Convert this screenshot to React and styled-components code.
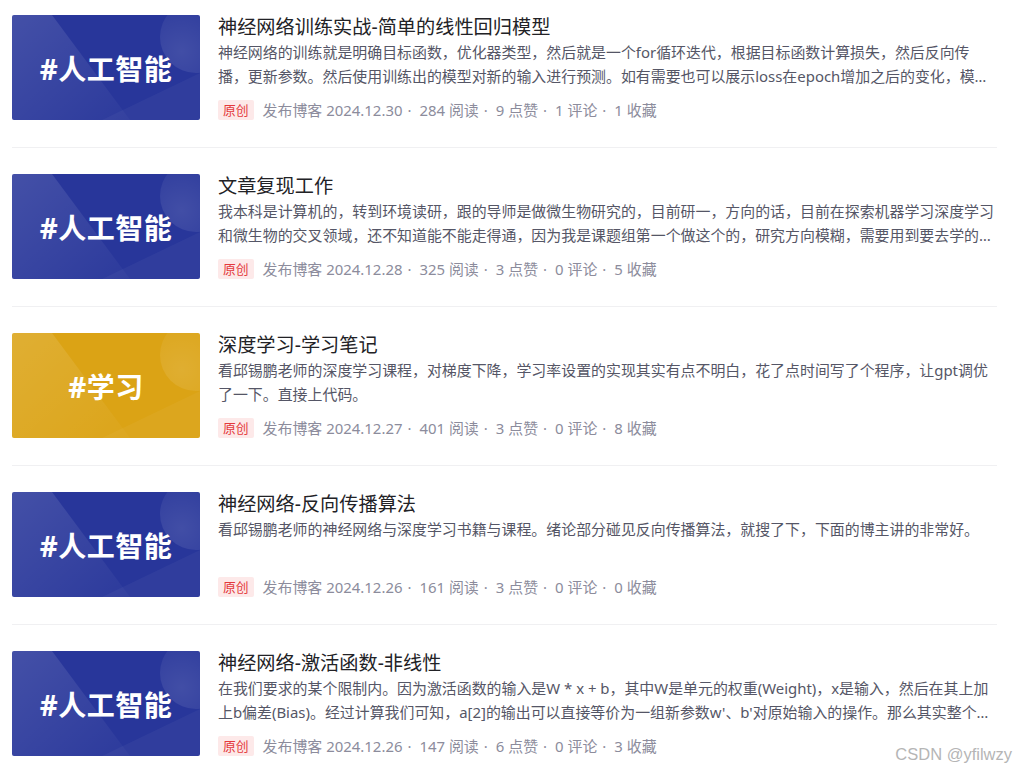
import React from "react";
import styled, { createGlobalStyle } from "styled-components";

const GlobalStyle = createGlobalStyle`
  body {
    margin: 0;
    background: #fff;
    font-family: "Noto Sans", "Noto Sans CJK SC", sans-serif;
  }
`;

const Page = styled.div`
  position: relative;
  width: 1016px;
  height: 773px;
  overflow: hidden;
  padding-left: 12px;
  box-sizing: border-box;
`;

const List = styled.div`
  width: 985px;
`;

const Item = styled.div`
  display: flex;
  gap: 18px;
  padding: 26.5px 0;
  border-bottom: 1px solid #f0f0f2;

  &:first-child {
    padding-top: 15px;
  }
`;

const Cover = styled.div`
  position: relative;
  flex: 0 0 188px;
  height: 105px;
  border-radius: 2px;
  overflow: hidden;
  display: flex;
  align-items: center;
  justify-content: center;
  background: ${(props) => (props.tone === "yellow" ? "#dba315" : "#28369a")};
`;

const CoverArt = styled.svg`
  position: absolute;
  inset: 0;
`;

const CoverText = styled.span`
  position: relative;
  color: #fff;
  font-size: 28px;
  font-weight: 700;
  letter-spacing: 0.5px;
`;

const Content = styled.div`
  flex: 1;
  min-width: 0;
  height: 105px;
  display: flex;
  flex-direction: column;
`;

const Title = styled.div`
  font-size: 19.2px;
  line-height: 24px;
  color: #222226;
  white-space: nowrap;
`;

const Desc = styled.div`
  margin-top: 2px;
  font-size: 14.93px;
  line-height: 23.5px;
  color: #555666;
  display: -webkit-box;
  -webkit-line-clamp: 2;
  -webkit-box-orient: vertical;
  overflow: hidden;
`;

const Meta = styled.div`
  margin-top: auto;
  display: flex;
  align-items: center;
  height: 21px;
  font-size: 14.93px;
  color: #8c8c9c;
  white-space: nowrap;
`;

const Tag = styled.span`
  display: inline-flex;
  align-items: center;
  height: 20px;
  padding: 0 5px;
  margin-right: 9px;
  border-radius: 2px;
  background: #fde9e9;
  color: #e4393c;
  font-size: 12.8px;
`;

const MetaItem = styled.span`
  &:not(:last-child)::after {
    content: "·";
    margin: 0 8px 0 5px;
  }
`;

const Watermark = styled.div`
  position: absolute;
  right: 4px;
  bottom: 9px;
  font-family: "Liberation Sans", Arial, sans-serif;
  font-size: 16.5px;
  color: #b5b5b5;
  text-shadow: 1px 1px 1px #fff, -1px -1px 1px #fff;
`;

const posts = [
  {
    cover: "#人工智能",
    tone: "blue",
    title: "神经网络训练实战-简单的线性回归模型",
    desc: "神经网络的训练就是明确目标函数，优化器类型，然后就是一个for循环迭代，根据目标函数计算损失，然后反向传播，更新参数。然后使用训练出的模型对新的输入进行预测。如有需要也可以展示loss在epoch增加之后的变化，模型的参数等等内容。",
    date: "2024.12.30",
    read: 284,
    like: 9,
    comment: 1,
    fav: 1,
  },
  {
    cover: "#人工智能",
    tone: "blue",
    title: "文章复现工作",
    desc: "我本科是计算机的，转到环境读研，跟的导师是做微生物研究的，目前研一，方向的话，目前在探索机器学习深度学习和微生物的交叉领域，还不知道能不能走得通，因为我是课题组第一个做这个的，研究方向模糊，需要用到要去学的东西很多。",
    date: "2024.12.28",
    read: 325,
    like: 3,
    comment: 0,
    fav: 5,
  },
  {
    cover: "#学习",
    tone: "yellow",
    title: "深度学习-学习笔记",
    desc: "看邱锡鹏老师的深度学习课程，对梯度下降，学习率设置的实现其实有点不明白，花了点时间写了个程序，让gpt调优了一下。直接上代码。",
    date: "2024.12.27",
    read: 401,
    like: 3,
    comment: 0,
    fav: 8,
  },
  {
    cover: "#人工智能",
    tone: "blue",
    title: "神经网络-反向传播算法",
    desc: "看邱锡鹏老师的神经网络与深度学习书籍与课程。绪论部分碰见反向传播算法，就搜了下，下面的博主讲的非常好。",
    date: "2024.12.26",
    read: 161,
    like: 3,
    comment: 0,
    fav: 0,
  },
  {
    cover: "#人工智能",
    tone: "blue",
    title: "神经网络-激活函数-非线性",
    desc: "在我们要求的某个限制内。因为激活函数的输入是W * x + b，其中W是单元的权重(Weight)，x是输入，然后在其上加上b偏差(Bias)。经过计算我们可知，a[2]的输出可以直接等价为一组新参数w'、b'对原始输入的操作。那么其实整个网络就等价于一个线性函数。",
    date: "2024.12.26",
    read: 147,
    like: 6,
    comment: 0,
    fav: 3,
  },
];

// background shapes of the cover picture
const Art = ({ id }) => (
  <CoverArt width="188" height="105" viewBox="0 0 188 105">
    <defs>
      <linearGradient id={id} x1="0" y1="0" x2="1" y2="1">
        <stop offset="0" stopColor="#fff" stopOpacity="0.13" />
        <stop offset="1" stopColor="#fff" stopOpacity="0.02" />
      </linearGradient>
      <radialGradient id={id + "c"} cx="0.3" cy="0.7" r="0.8">
        <stop offset="0" stopColor="#fff" stopOpacity="0.12" />
        <stop offset="1" stopColor="#fff" stopOpacity="0.02" />
      </radialGradient>
    </defs>
    <polygon points="0,0 40,0 118,105 0,105" fill={`url(#${id})`} />
    <polygon points="90,105 188,58 188,105" fill="#fff" fillOpacity="0.04" />
    <circle cx="184" cy="22" r="36" fill={`url(#${id}c)`} />
  </CoverArt>
);

const App = () => {
  return (
    <Page>
      <GlobalStyle />
      <List>
        {posts.map((post, i) => (
          <Item key={i}>
            <Cover tone={post.tone}>
              <Art id={"g" + i} />
              <CoverText>{post.cover}</CoverText>
            </Cover>
            <Content>
              <Title>{post.title}</Title>
              <Desc>{post.desc}</Desc>
              <Meta>
                <Tag>原创</Tag>
                <MetaItem>发布博客 {post.date}</MetaItem>
                <MetaItem>{post.read} 阅读</MetaItem>
                <MetaItem>{post.like} 点赞</MetaItem>
                <MetaItem>{post.comment} 评论</MetaItem>
                <MetaItem>{post.fav} 收藏</MetaItem>
              </Meta>
            </Content>
          </Item>
        ))}
      </List>
      <Watermark>CSDN @yfilwzy</Watermark>
    </Page>
  );
};

export default App;
